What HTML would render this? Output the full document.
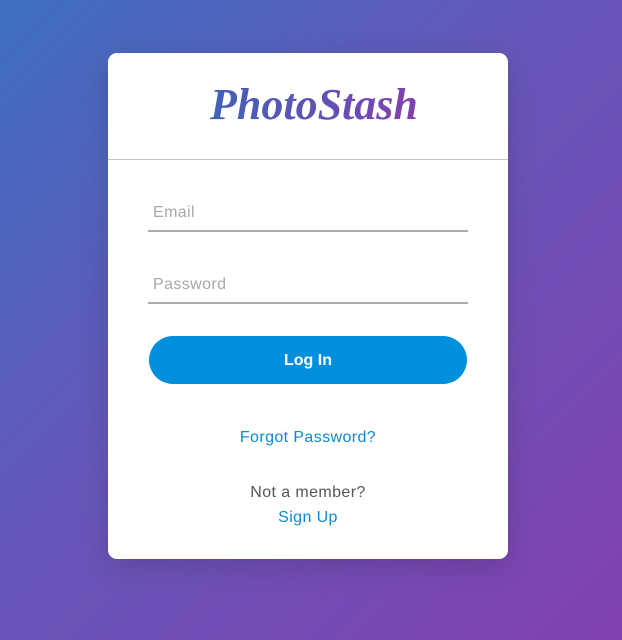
<!DOCTYPE html>
<html><head><style>
html,body{margin:0;width:622px;height:640px;overflow:hidden}
body{background:linear-gradient(135deg,#3e6fc0 0%,#6657b8 45%,#8240b0 100%);font-family:"Liberation Sans",sans-serif;position:relative}
.card{position:absolute;left:108px;top:53px;width:400px;height:506px;background:#fff;border-radius:9px;box-shadow:0 8px 30px rgba(0,0,0,.15)}
.logo{position:absolute;left:100px;top:26px;height:56px;line-height:56px;padding:0 8px 0 2px;font:italic bold 44px "Liberation Serif",serif;background:linear-gradient(90deg,#3f63b8,#8440b0);-webkit-background-clip:text;background-clip:text;color:transparent;white-space:nowrap}
.hr{position:absolute;left:0;right:0;top:106px;height:1px;background:#c4c4c4}
.field{position:absolute;left:40px;width:320px;height:2px;background:#aaa}
.ph{position:absolute;left:45px;color:#a8a8a8;font-size:16px;letter-spacing:.4px}
.btn{position:absolute;left:41px;top:283px;width:318px;height:48px;border-radius:24px;background:#008fdd;color:#fff;font-weight:bold;font-size:16px;text-align:center;line-height:50px}
.t{position:absolute;left:0;right:0;text-align:center;font-size:16px;letter-spacing:.4px}
</style></head><body>
<div class="card">
<div class="logo">PhotoStash</div>
<div class="hr"></div>
<div class="ph" style="top:151px">Email</div>
<div class="field" style="top:177px"></div>
<div class="ph" style="top:223px">Password</div>
<div class="field" style="top:249px"></div>
<div class="btn">Log In</div>
<div class="t" style="top:376px;color:#0a8ad4">Forgot Password?</div>
<div class="t" style="top:431px;color:#555">Not a member?</div>
<div class="t" style="top:456px;color:#0a8ad4">Sign Up</div>
</div>
</body></html>
